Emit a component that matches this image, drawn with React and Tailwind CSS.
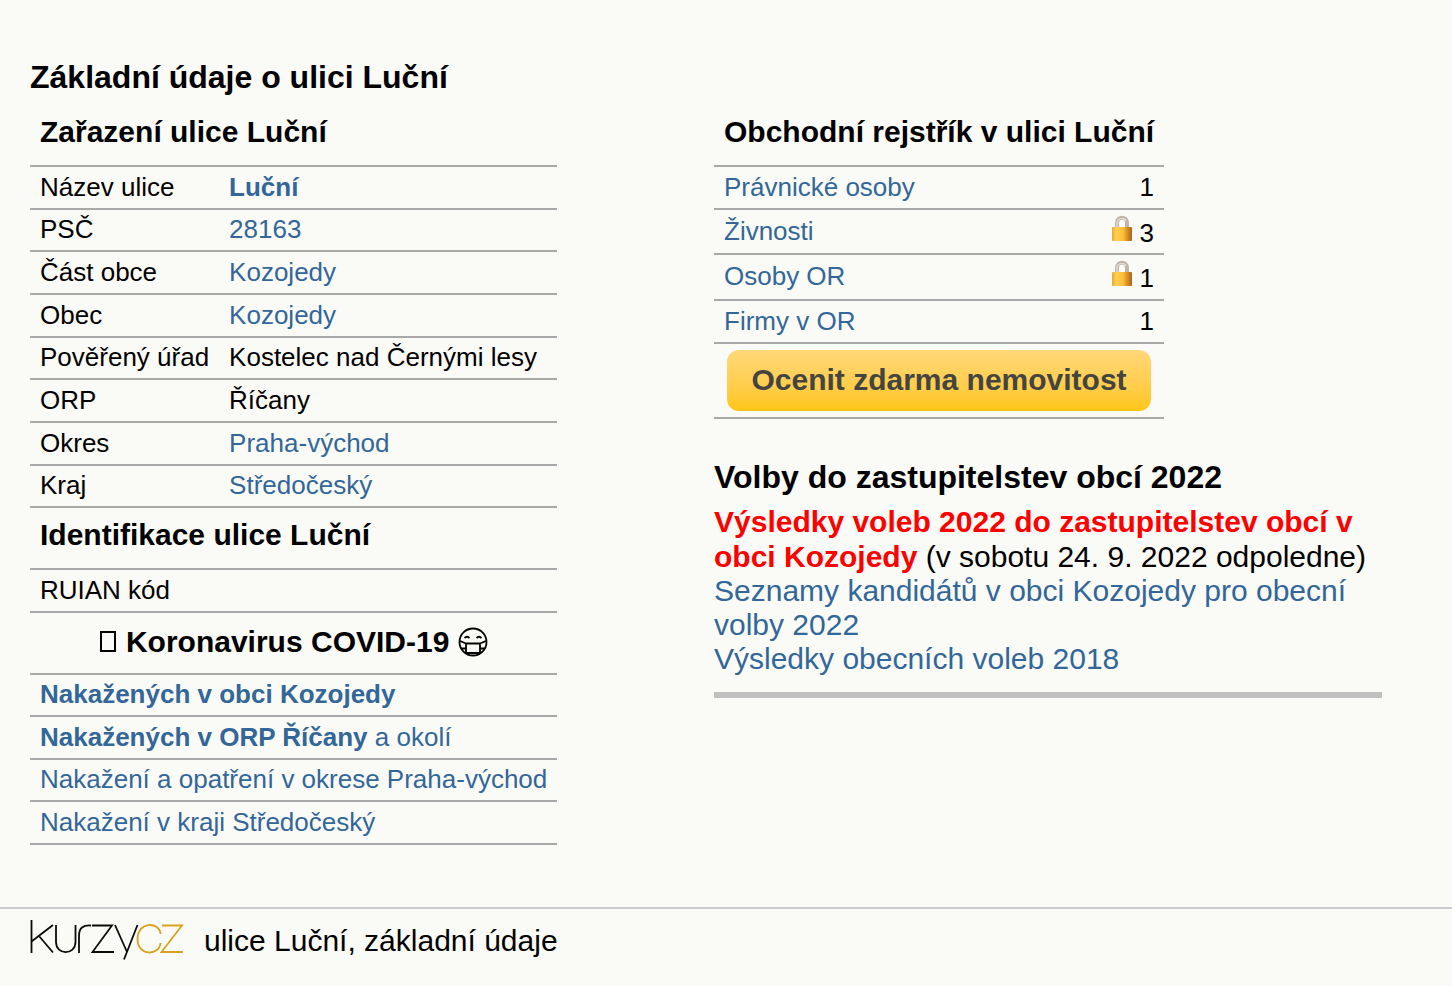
import React from 'react'

const location = [
  { label: 'Název ulice', value: 'Luční', link: true, bold: true },
  { label: 'PSČ', value: '28163', link: true },
  { label: 'Část obce', value: 'Kozojedy', link: true },
  { label: 'Obec', value: 'Kozojedy', link: true },
  { label: 'Pověřený úřad', value: 'Kostelec nad Černými lesy' },
  { label: 'ORP', value: 'Říčany' },
  { label: 'Okres', value: 'Praha-východ', link: true },
  { label: 'Kraj', value: 'Středočeský', link: true },
]

const covid = [
  { strong: 'Nakažených v obci Kozojedy', rest: '' },
  { strong: 'Nakažených v ORP Říčany', rest: ' a okolí' },
  { strong: '', rest: 'Nakažení a opatření v okrese Praha-východ' },
  { strong: '', rest: 'Nakažení v kraji Středočeský' },
]

const registry = [
  { label: 'Právnické osoby', count: 1 },
  { label: 'Živnosti', count: 3, locked: true },
  { label: 'Osoby OR', count: 1, locked: true },
  { label: 'Firmy v OR', count: 1 },
]

function Lock() {
  return (
    <svg viewBox="0 0 22 28" className="inline-block w-[22px] h-7 align-baseline" aria-hidden="true">
      <defs>
        <linearGradient id="lockBody" x1="0" x2="1" y1="0" y2="0">
          <stop offset="0" stopColor="#e8a63a" />
          <stop offset="0.2" stopColor="#ffd050" />
          <stop offset="0.55" stopColor="#fdc03a" />
          <stop offset="0.75" stopColor="#dc9226" />
          <stop offset="1" stopColor="#a96716" />
        </linearGradient>
      </defs>
      <path d="M7 15V9C7 2 17 2 17 9v6" fill="none" stroke="#c0b4aa" strokeWidth="4" />
      <path d="M7 14V9c0-5 7-6 9-2" fill="none" stroke="#e4dcd4" strokeWidth="1.5" />
      <rect x="2" y="13" width="20" height="14" rx="1" fill="url(#lockBody)" />
    </svg>
  )
}

function MaskFace() {
  return (
    <svg viewBox="0 0 30 30" className="inline-block w-[30px] h-[30px] align-[-5px]" role="img" aria-label="rouška">
      <g fill="none" stroke="#000" strokeWidth="1.8">
        <circle cx="15" cy="15" r="13.500" />
        <path d="M6.500 11q2.500-2.500 5 0M18.500 11q2.500-2.500 5 0" />
        <path d="M8 16.500h14v9.500H8zM2 14l6 2.500M28 14l-6 2.500M3 21.500h5M27 21.500h-5" />
      </g>
    </svg>
  )
}

function Logo() {
  return (
    <svg viewBox="0 0 154 42" className="w-[154px] h-[42px] shrink-0" role="img" aria-label="kurzycz">
      <g fill="none" stroke="#0a0a0a" strokeWidth="1.8">
        <path d="M1.500 1v33M1.500 22.500L23 6M9 17L23 33.500" />
        <path d="M26 6v17c0 13.500 19.500 13.500 19.500 0V6" />
        <path d="M49 34V17C49 9 53 6 61 6.500" />
        <path d="M62 6.500H82L62.500 33H84" />
        <path d="M85 6l12 27M107.500 6L94 40.500" />
      </g>
      <g fill="none" stroke="#d9a11e" strokeWidth="1.8">
        <path d="M130.500 15C130 2.500 107.500 2 107.500 20c0 17.500 22 17 23 4" />
        <path d="M132 6.500h20L131.500 33H153" />
      </g>
    </svg>
  )
}

function SectionHead({ children, center }) {
  return (
    <tr className="h-[62px] border-b-2 border-[#a9a9a9]">
      <th colSpan={2} className={`px-[10px] whitespace-nowrap text-[30px] leading-[34px] font-bold ${center ? 'text-center pb-[2px]' : 'text-left pb-[6px]'}`}>
        {children}
      </th>
    </tr>
  )
}

export default function App() {
  return (
    <div className="min-h-screen bg-[#fafbf6] text-black font-['Liberation_Sans',Arial,sans-serif] overflow-hidden">
      <main className="grid grid-cols-2 gap-x-4 pl-[30px] pr-[70px] pt-[58px]">
        {/* Street details */}
        <section>
          <h2 className="text-[32px] leading-[38px] font-bold">Základní údaje o ulici Luční</h2>
          <table className="mt-2 border-collapse text-[26px] leading-[30px]">
            <colgroup>
              <col className="w-[189px]" />
              <col className="w-[338px]" />
            </colgroup>
            <tbody>
              <SectionHead>Zařazení ulice Luční</SectionHead>
              {location.map((row) => (
                <tr key={row.label} className="h-[43px] nth-[3n]:h-[42px] border-b-2 border-[#a9a9a9]">
                  <td className="pl-[10px] pb-[2px] whitespace-nowrap">{row.label}</td>
                  <td className="px-[10px] pb-[2px] whitespace-nowrap">
                    {row.link ? (
                      <a href="#" className={row.bold ? 'text-[#336699] font-bold' : 'text-[#336699]'}>{row.value}</a>
                    ) : row.value}
                  </td>
                </tr>
              ))}
              <SectionHead>Identifikace ulice Luční</SectionHead>
              <tr className="h-[43px] border-b-2 border-[#a9a9a9]">
                <td className="px-[10px] pb-[2px]">RUIAN kód</td>
                <td></td>
              </tr>
              <SectionHead center>
                <span className="inline-block w-4 h-[21px] mr-[2px] border-2 border-black" aria-hidden="true"></span> Koronavirus COVID-19 <MaskFace />
              </SectionHead>
              {covid.map((row) => (
                <tr key={row.strong + row.rest} className="even:h-[43px] odd:h-[42px] border-b-2 border-[#a9a9a9]">
                  <td colSpan={2} className="px-[10px] pb-[2px] whitespace-nowrap">
                    <a href="#" className="text-[#336699]"><b>{row.strong}</b>{row.rest}</a>
                  </td>
                </tr>
              ))}
            </tbody>
          </table>
        </section>

        {/* Business registry and elections */}
        <section className="pt-[46px]">
          <table className="w-[450px] border-collapse text-[26px] leading-[30px]">
            <tbody>
              <SectionHead>Obchodní rejstřík v ulici Luční</SectionHead>
              {registry.map((row) => (
                <tr key={row.label} className={`${row.locked ? 'h-[45px] nth-4:h-[46px]' : 'h-[43px]'} border-b-2 border-[#a9a9a9]`}>
                  <td className="px-[10px] pb-[2px]"><a href="#" className="text-[#336699]">{row.label}</a></td>
                  <td className="px-[10px] pb-[2px] text-right whitespace-nowrap">{row.locked && <><Lock />{' '}</>}{row.count}</td>
                </tr>
              ))}
              <tr className="h-[75px] border-b-2 border-[#a9a9a9]">
                <td colSpan={2} className="text-center">
                  <button className="h-[61px] w-[424px] pb-[2px] rounded-xl bg-gradient-to-b from-[#ffd877] to-[#ffc60b] text-[30px] leading-[34px] font-bold text-[#444440] align-middle">
                    Ocenit zdarma nemovitost
                  </button>
                </td>
              </tr>
            </tbody>
          </table>

          <h2 className="mt-[39px] text-[32px] leading-[38px] font-bold">Volby do zastupitelstev obcí 2022</h2>
          <div className="mt-2 text-[30px] leading-[34px]">
            <p className="leading-[35px]">
              <a href="#" className="font-bold text-[#ff0000]">Výsledky voleb 2022 do zastupitelstev obcí v obci Kozojedy</a> (v sobotu 24. 9. 2022 odpoledne)
            </p>
            <p><a href="#" className="text-[#336699]">Seznamy kandidátů v obci Kozojedy pro obecní volby 2022</a></p>
            <p><a href="#" className="text-[#336699]">Výsledky obecních voleb 2018</a></p>
          </div>
          <hr className="mt-4 h-[6px] border-0 bg-[#c0c0c0]" />
        </section>
      </main>

      <footer className="mt-[62px] flex items-center gap-5 border-t-2 border-[#cccccc] px-[30px] pt-[9px]">
        <a href="#"><Logo /></a>
        <span className="pt-[2px] text-[30px] leading-[42px]">ulice Luční, základní údaje</span>
      </footer>
    </div>
  )
}
